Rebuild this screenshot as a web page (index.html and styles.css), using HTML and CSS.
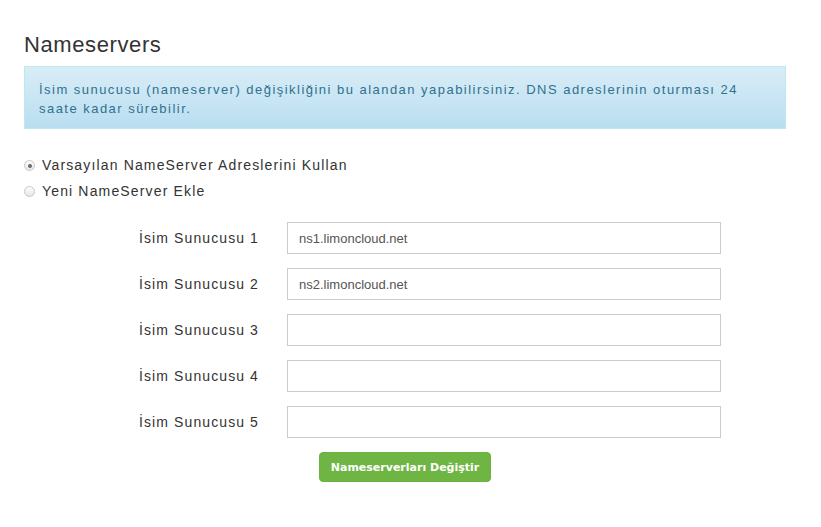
FILE: index.html
```html
<!DOCTYPE html>
<html lang="tr">
<head>
<meta charset="utf-8">
<title>Nameservers</title>
<link rel="stylesheet" href="styles.css">
</head>
<body>
<div class="page">
  <h2 class="title">Nameservers</h2>

  <div class="alert">
    İsim sunucusu (nameserver) değişikliğini bu alandan yapabilirsiniz. DNS adreslerinin oturması 24 saate kadar sürebilir.
  </div>

  <div class="choices">
    <label class="choice"><input type="radio" name="ns" checked> Varsayılan NameServer Adreslerini Kullan</label>
    <label class="choice"><input type="radio" name="ns"> Yeni NameServer Ekle</label>
  </div>

  <form class="ns-form">
    <div class="row">
      <label class="row-label">İsim Sunucusu 1</label>
      <input class="field" type="text" value="ns1.limoncloud.net">
    </div>
    <div class="row">
      <label class="row-label">İsim Sunucusu 2</label>
      <input class="field" type="text" value="ns2.limoncloud.net">
    </div>
    <div class="row">
      <label class="row-label">İsim Sunucusu 3</label>
      <input class="field" type="text">
    </div>
    <div class="row">
      <label class="row-label">İsim Sunucusu 4</label>
      <input class="field" type="text">
    </div>
    <div class="row">
      <label class="row-label">İsim Sunucusu 5</label>
      <input class="field" type="text">
    </div>
    <div class="actions">
      <button class="btn-green" type="button">Nameserverları Değiştir</button>
    </div>
  </form>
</div>
</body>
</html>
```

FILE: styles.css
```css
body
{
	margin:0;
	background:#fff;
	color:#333;
	font-family:"Liberation Sans", Arial, sans-serif;
}
.page
{
	width:762px;
	padding:33px 0 0 24px;
}
.title
{
	margin:0 0 9px;
	font-size:22px;
	font-weight:normal;
	letter-spacing:0.6px;
	line-height:24px;
	color:#333;
}
.alert
{
	border:1px solid #bce8f1;
	background:linear-gradient(#d9edf7, #b9def0);
	color:#31708f;
	font-size:13px;
	letter-spacing:1.47px;
	line-height:19px;
	padding:13px 14px 10px;
}
.choices
{
	margin-top:27px;
	display:flex;
	flex-direction:column;
	gap:7px;
}
.choice
{
	display:flex;
	align-items:center;
	font-size:14px;
	letter-spacing:1.15px;
	line-height:19px;
	color:#333;
}
.choice input
{
	-webkit-appearance:none;
	appearance:none;
	width:11px;
	height:11px;
	margin:0 7px 0 0;
	border:1px solid #c8c8c8;
	border-radius:50%;
	background:linear-gradient(#fdfdfd, #e6e6e6);
	position:relative;
}
.choice input:checked::after
{
	content:"";
	position:absolute;
	left:2.5px;
	top:2.5px;
	width:4px;
	height:4px;
	border-radius:50%;
	background:#6b6b6b;
}
.ns-form
{
	margin-top:21px;
	display:flex;
	flex-direction:column;
	gap:14px;
}
.row
{
	display:flex;
	align-items:center;
}
.row-label
{
	width:263px;
	padding-right:28px;
	box-sizing:border-box;
	text-align:right;
	font-size:14px;
	letter-spacing:1.1px;
	color:#333;
}
.field
{
	width:434px;
	height:32px;
	box-sizing:border-box;
	border:1px solid #ccc;
	padding:0 11px;
	font-family:"Liberation Sans", Arial, sans-serif;
	font-size:13px;
	color:#555;
	outline:none;
}
.actions
{
	padding-left:295px;
}
.btn-green
{
	width:172px;
	height:30px;
	border:1px solid #6cb43f;
	border-radius:4px;
	background:#6fb543;
	color:#fff;
	font-family:"DejaVu Sans", Verdana, sans-serif;
	font-size:11px;
	font-weight:bold;
	padding:0;
}
```
